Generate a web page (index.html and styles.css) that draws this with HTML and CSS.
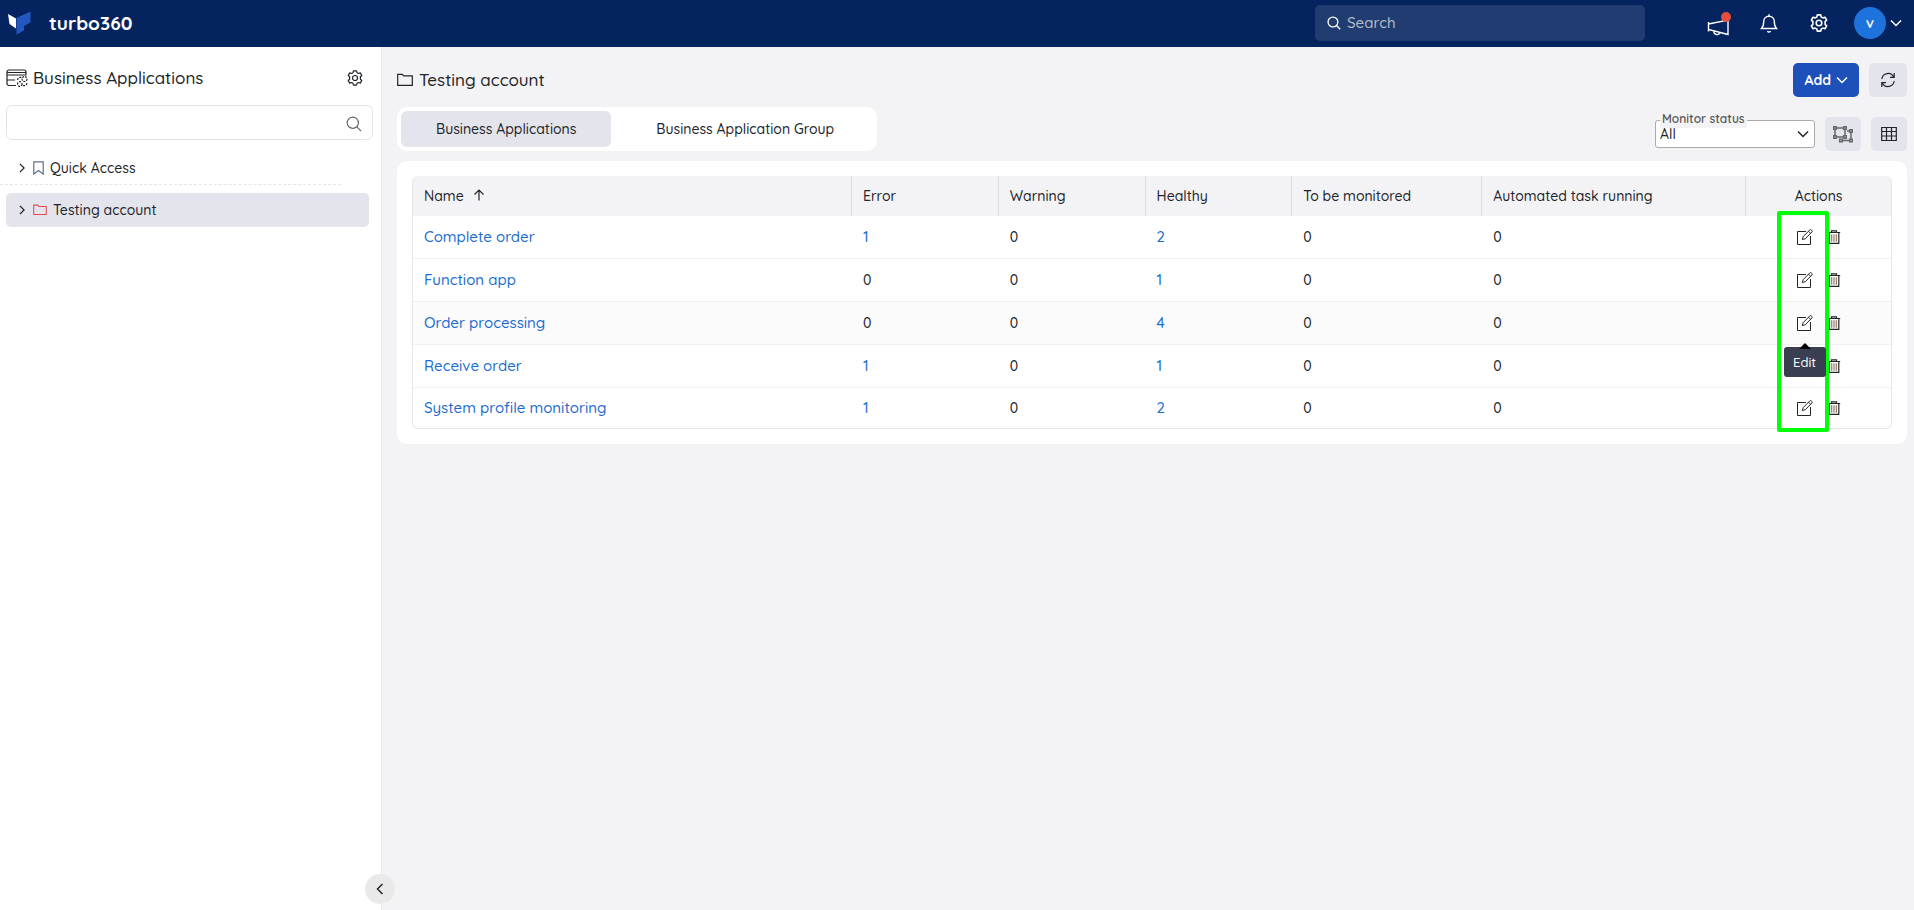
FILE: index.html
```
<!DOCTYPE html>
<html lang="en">
<head>
<meta charset="utf-8">
<meta name="viewport" content="width=device-width, initial-scale=1">
<title>turbo360 - Business Applications</title>
<link rel="stylesheet" href="styles.css">
</head>
<body>
<svg class="sprite" aria-hidden="true">
  <symbol id="chevron" viewBox="0 0 12 12"><path d="M1 3.5l5 5 5-5"/></symbol>
  <symbol id="search" viewBox="0 0 16 16"><circle cx="6.8" cy="6.8" r="5.6"/><path d="M10.9 10.9l4.2 4.2"/></symbol>
  <symbol id="gear" viewBox="0 0 16 16"><circle cx="8" cy="8" r="2.5"/><path stroke-linejoin="round" d="M6.500.8h3l.5 1.900 1.400.8 1.900-.6 1.500 2.600-1.400 1.300v2.400l1.400 1.300-1.500 2.600-1.900-.6-1.400.8-.5 1.900h-3L6 13.300l-1.400-.8-1.900.6-1.500-2.600 1.400-1.300V6.800L1.200 5.500l1.500-2.600 1.900.6L6 2.700z"/></symbol>
  <symbol id="folder" viewBox="0 0 16 14"><path d="M.7 12.300V1.300h4.600l1.500 1.500h8.500v9.500z"/></symbol>
  <symbol id="edit" viewBox="0 0 16 16"><path d="M9 2.500H.5v13h13V7"/><path d="M5.300 10.500l.8-2.800L12.700 1a1.200 1.200 0 0 1 1.700 0l.4.4a1.200 1.200 0 0 1 0 1.700L8.200 9.800zM11.500 2.300l2.100 2.100"/></symbol>
  <symbol id="trash" viewBox="0 0 14 14"><path d="M.8 2.500h12.400M4.500 2.300V.8h5v1.500M2.200 2.700v10.600h9.600V2.700"/><path class="bars" d="M4.700 4.300v7.400M7 4.300v7.400M9.300 4.300v7.400"/></symbol>
</svg>

<header class="topbar">
  <a class="brand" href="#">
    <svg class="brand-mark" viewBox="0 0 24 24" aria-hidden="true"><path fill="#fff" d="M1 3l8 4.500v10L2.500 13z"/><path fill="#2356bf" d="M9.500 7L23.500.5v11L17 15v4.500L9.500 23.500z"/></svg>
    <span class="brand-name">turbo360</span>
  </a>
  <label class="global-search">
    <svg class="icon icon-14" aria-hidden="true"><use href="#search"/></svg>
    <input type="search" placeholder="Search" aria-label="Search">
  </label>
  <nav class="top-actions" aria-label="Account">
    <button class="top-button" type="button" aria-label="Announcements">
      <svg class="icon announce" viewBox="0 0 24 20" aria-hidden="true"><path d="M1.500 8L21 4v14.500L1.500 13.500zM1.500 6v9.500M7 15a3 3 0 0 0 5.800 1.500"/></svg>
      <span class="dot"></span>
    </button>
    <button class="top-button" type="button" aria-label="Notifications">
      <svg class="icon icon-20" viewBox="0 0 20 20" aria-hidden="true"><path d="M2.500 15.500c2.200-2.200 2.200-4 2.200-7C4.700 5.500 7 3.200 10 3.200s5.300 2.300 5.300 5.300c0 3 0 4.800 2.200 7zM8.300 18.200q1.700 1.500 3.400 0M10 1.200v2"/></svg>
    </button>
    <button class="top-button" type="button" aria-label="Settings">
      <svg class="icon icon-18" aria-hidden="true"><use href="#gear"/></svg>
    </button>
    <button class="profile" type="button" aria-label="Profile">
      <span class="avatar">v</span>
      <svg class="icon icon-12" aria-hidden="true"><use href="#chevron"/></svg>
    </button>
  </nav>
</header>

<div class="shell">
  <aside class="sidebar">
    <div class="side-head">
      <svg class="icon app-icon" viewBox="0 0 22 18" aria-hidden="true"><path d="M10 16.500H3A2 2 0 0 1 1 14.500V3a2 2 0 0 1 2-2h15a2 2 0 0 1 2 2v3.500M1 3.500h19M1 6h19M1 11h8"/><g stroke-width="1.200" stroke-dasharray="2 1"><circle cx="18.500" cy="10" r="2.500"/><circle cx="13.800" cy="15" r="2.300"/><path d="M11.500 11a3 3 0 0 1 4-2.500M17 16.500a3 3 0 0 0 4-2.500"/></g></svg>
      <h2>Business Applications</h2>
      <button class="plain" type="button" aria-label="Application settings"><svg class="icon icon-16" aria-hidden="true"><use href="#gear"/></svg></button>
    </div>
    <label class="side-search">
      <input type="text" aria-label="Filter applications">
      <svg class="icon icon-16" aria-hidden="true"><use href="#search"/></svg>
    </label>
    <nav class="tree" aria-label="Folders">
      <a class="node quick" href="#">
        <svg class="icon icon-10 right" aria-hidden="true"><use href="#chevron"/></svg>
        <svg class="icon bookmark" viewBox="0 0 11 14" aria-hidden="true"><path d="M.8.8h9.400v12.200L5.500 9.500.8 13z"/></svg>
        <span>Quick Access</span>
      </a>
      <a class="node selected" href="#" aria-current="true">
        <svg class="icon icon-10 right" aria-hidden="true"><use href="#chevron"/></svg>
        <svg class="icon folder-small" aria-hidden="true"><use href="#folder"/></svg>
        <span>Testing account</span>
      </a>
    </nav>
    <button class="collapse" type="button" aria-label="Collapse sidebar"><svg class="icon icon-12 left" aria-hidden="true"><use href="#chevron"/></svg></button>
  </aside>

  <main class="content">
    <div class="title-row">
      <h1><svg class="icon folder" aria-hidden="true"><use href="#folder"/></svg>Testing account</h1>
      <div class="tools">
        <button class="add" type="button">Add <svg class="icon icon-12" aria-hidden="true"><use href="#chevron"/></svg></button>
        <button class="square" type="button" aria-label="Refresh"><svg class="icon icon-16" viewBox="0 0 16 16" aria-hidden="true"><path d="M1.800 7A6.300 6.300 0 0 1 13.700 5M14.200 1v4.300H10M14.200 9A6.300 6.300 0 0 1 2.300 11M1.800 15v-4.300H6"/></svg></button>
      </div>
    </div>
    <div class="filter-row">
      <div class="tabs" role="tablist">
        <button class="tab active" type="button" role="tab" aria-selected="true">Business Applications</button>
        <button class="tab" type="button" role="tab" aria-selected="false">Business Application Group</button>
      </div>
      <div class="tools">
        <div class="status">
          <label for="status">Monitor status</label>
          <select id="status"><option>All</option></select>
          <svg class="icon icon-12" aria-hidden="true"><use href="#chevron"/></svg>
        </div>
        <button class="square group" type="button" aria-label="Group view"><svg class="icon icon-20" viewBox="0 0 20 18" aria-hidden="true"><path d="M2 3h10v9H2zM14 6h4v9.500H8V14"/><path fill="#e3e4ec" d="M.700 1.700h2.500v2.500H.700zM10.700 1.700h2.500v2.500h-2.500zM.7 10.700h2.500v2.500H.7zM10.700 10.700h2.500v2.500h-2.500zM16.700 4.700h2.500v2.500h-2.500zM16.700 14.200h2.500v2.500h-2.500zM6.700 14.200h2.500v2.500H6.700z"/></svg></button>
        <button class="square" type="button" aria-label="Table view"><svg class="icon icon-16" viewBox="0 0 16 16" aria-hidden="true"><path d="M.7 1.500h14.600v13H.7zM.7 5.500h14.600M.7 10h14.600M5.500 1.500v13M10.500 1.500v13"/></svg></button>
      </div>
    </div>

    <section class="card">
      <div class="table-frame">
        <table>
          <colgroup><col class="c-name"><col class="c-count"><col class="c-count"><col class="c-count"><col class="c-monitor"><col class="c-task"><col class="c-actions"></colgroup>
          <thead>
            <tr><th>Name <svg class="icon sort" viewBox="0 0 12 12" aria-hidden="true"><path d="M6 11.500V1.200M1.500 5.500L6 1l4.500 4.500"/></svg></th><th>Error</th><th>Warning</th><th>Healthy</th><th>To be monitored</th><th>Automated task running</th><th class="actions-head">Actions</th></tr>
          </thead>
          <tbody>
            <tr><td><a href="#">Complete order</a></td><td><a href="#">1</a></td><td>0</td><td><a href="#">2</a></td><td>0</td><td>0</td>
              <td><div class="row-actions"><button class="plain" type="button" aria-label="Edit"><svg class="icon icon-16 thin"><use href="#edit"/></svg></button><button class="plain" type="button" aria-label="Delete"><svg class="icon icon-14"><use href="#trash"/></svg></button></div></td></tr>
            <tr><td><a href="#">Function app</a></td><td>0</td><td>0</td><td><a href="#">1</a></td><td>0</td><td>0</td>
              <td><div class="row-actions"><button class="plain" type="button" aria-label="Edit"><svg class="icon icon-16 thin"><use href="#edit"/></svg></button><button class="plain" type="button" aria-label="Delete"><svg class="icon icon-14"><use href="#trash"/></svg></button></div></td></tr>
            <tr class="hovered"><td><a href="#">Order processing</a></td><td>0</td><td>0</td><td><a href="#">4</a></td><td>0</td><td>0</td>
              <td><div class="row-actions"><button class="plain" type="button" aria-describedby="edit-tip" aria-label="Edit"><svg class="icon icon-16 thin"><use href="#edit"/></svg></button><button class="plain" type="button" aria-label="Delete"><svg class="icon icon-14"><use href="#trash"/></svg></button><span class="tooltip" id="edit-tip" role="tooltip">Edit</span></div></td></tr>
            <tr><td><a href="#">Receive order</a></td><td><a href="#">1</a></td><td>0</td><td><a href="#">1</a></td><td>0</td><td>0</td>
              <td><div class="row-actions"><button class="plain" type="button" aria-label="Edit"><svg class="icon icon-16 thin"><use href="#edit"/></svg></button><button class="plain" type="button" aria-label="Delete"><svg class="icon icon-14"><use href="#trash"/></svg></button></div></td></tr>
            <tr><td><a href="#">System profile monitoring</a></td><td><a href="#">1</a></td><td>0</td><td><a href="#">2</a></td><td>0</td><td>0</td>
              <td><div class="row-actions"><button class="plain" type="button" aria-label="Edit"><svg class="icon icon-16 thin"><use href="#edit"/></svg></button><button class="plain" type="button" aria-label="Delete"><svg class="icon icon-14"><use href="#trash"/></svg></button></div></td></tr>
          </tbody>
        </table>
        <div class="highlight" aria-hidden="true"></div>
      </div>
    </section>
  </main>
</div>
</body>
</html>
```
FILE: styles.css
```
:root {
  --navy: #05245f;
  --blue: #1d50b8;
  --link: #1c6dd0;
  --ink: #212529;
  --page: #f3f3f6;
  --soft: #e3e4ec;
  --line: #e6e6e9;
}

* { box-sizing: border-box; }

body {
  margin: 0;
  min-height: 100vh;
  display: flex;
  flex-direction: column;
  background: var(--page);
  color: var(--ink);
  font: 500 14px/20px Quicksand, Inter, "Open Sans", sans-serif;
}

button, input, select { font: inherit; color: inherit; }
button { border: 0; padding: 0; cursor: pointer; background: none; }
a { color: var(--link); text-decoration: none; }
h1, h2 { margin: 0; font-size: 17px; line-height: 24px; font-weight: 500; }

.sprite { position: absolute; width: 0; height: 0; }
.icon { display: block; flex: none; fill: none; stroke: currentColor; stroke-width: 1.200; }
.icon-10 { width: 10px; height: 10px; stroke-width: 1.500; }
.icon-12 { width: 12px; height: 12px; stroke-width: 1.500; }
.icon-14 { width: 14px; height: 14px; }
.icon-16 { width: 16px; height: 16px; }
.icon-18 { width: 18px; height: 18px; }
.icon-20 { width: 20px; height: 20px; stroke-width: 1.500; }
.thin { stroke-width: 1; }
.right { transform: rotate(-90deg); }
.left { transform: rotate(90deg); }
.folder { width: 16px; height: 14px; }
.folder-small { width: 14px; height: 12px; color: #e4494e; }
.bars { stroke: #98796a; }

.topbar {
  display: flex;
  align-items: center;
  height: 47px;
  padding: 0 12px 2px 7px;
  background: var(--navy);
  color: #fff;
}
.brand { display: flex; align-items: center; gap: 18px; margin-right: auto; color: #fff; }
.brand-mark { width: 24px; height: 24px; }
.brand-name { font-size: 19px; line-height: 24px; font-weight: 700; }
.global-search {
  display: flex;
  align-items: center;
  gap: 6px;
  width: 330px;
  height: 36px;
  padding: 0 12px;
  border-radius: 5px;
  background: #213c70;
}
.global-search .icon { stroke-width: 1.500; }
.global-search input { flex: 1; min-width: 0; border: 0; padding: 0; outline: 0; background: none; font-size: 15px; }
.global-search input::placeholder { color: #b5bccb; opacity: 1; }
.top-actions { display: flex; align-items: center; gap: 26px; margin-left: 62px; }
.top-button { position: relative; display: grid; place-items: center; width: 24px; height: 24px; }
.top-button .icon { stroke-width: 1.400; }
.announce { width: 24px; height: 20px; }
.dot { position: absolute; top: 1px; right: 0; width: 10px; height: 10px; border-radius: 50%; background: #e74c3c; }
.announce { margin-top: 5px; }
.profile { display: flex; align-items: center; gap: 4px; margin-left: -3px; }
.avatar { display: grid; place-items: center; width: 32px; height: 32px; border-radius: 50%; background: #1d73db; color: #fff; font-size: 15px; font-weight: 600; }

.shell { flex: 1; display: flex; }
.sidebar { position: relative; flex: none; width: 382px; padding: 19px 8px 0 6px; border-right: 1px solid #e9e9ec; background: #fff; }
.side-head { display: flex; align-items: center; gap: 5px; padding-right: 10px; }
.side-head h2 { flex: 1; }
.app-icon { width: 22px; height: 18px; }
.plain { display: grid; place-items: center; }
.side-search {
  display: flex;
  align-items: center;
  height: 35px;
  margin-top: 15px;
  padding: 3px 10px 0;
  border: 1px solid #e3e3e6;
  border-radius: 6px;
}
.side-search input { flex: 1; min-width: 0; border: 0; outline: 0; background: none; }
.side-search .icon { color: #666; }
.tree { display: flex; flex-direction: column; gap: 8px; margin-top: 11px; }
.node { display: flex; align-items: center; gap: 6px; height: 34px; padding-left: 11px; color: var(--ink); }
.quick { margin: 0 32px 0 -6px; padding-left: 17px; border-bottom: 1px dashed #e6e6e6; }
.bookmark { width: 11px; height: 14px; color: #5d708e; }
.selected { margin-right: 4px; border-radius: 5px; background: var(--soft); }
.collapse {
  position: absolute;
  right: -14px;
  bottom: 6px;
  display: grid;
  place-items: center;
  width: 30px;
  height: 30px;
  border-radius: 50%;
  background: #e9e9ea;
}

.content { flex: 1; min-width: 0; padding: 16px 7px 16px 15px; }
.title-row, .filter-row { display: flex; align-items: center; justify-content: space-between; }
h1 { display: flex; align-items: center; gap: 6px; }
.tools { display: flex; align-items: center; gap: 10px; }
.add { display: flex; align-items: center; gap: 5px; height: 34px; padding: 0 11px; border-radius: 5px; background: var(--blue); color: #fff; font-weight: 700; }
.square { display: grid; place-items: center; width: 38px; height: 34px; border-radius: 5px; background: var(--soft); }
.filter-row { margin-top: 10px; }
.filter-row .tools { padding-top: 10px; }
.filter-row .square { width: 36px; }
.group { color: #666; }
.tabs { display: flex; gap: 6px; padding: 4px; border-radius: 10px; background: #fff; }
.tab { height: 36px; padding: 0 35px; border-radius: 6px; }
.tab + .tab { padding: 0 39px; }
.tab.active { background: var(--soft); }
.status { position: relative; }
.status select { display: block; width: 160px; height: 28px; padding: 0 4px; border: 1px solid #aaa; border-radius: 3px; background: #fff; appearance: none; }
.status label { position: absolute; top: -10px; left: 5px; padding: 0 2px; background: linear-gradient(transparent 9px, var(--page) 9px); color: #555; font-size: 12px; line-height: 18px; font-weight: 600; }
.status .icon { position: absolute; top: 8px; right: 6px; pointer-events: none; }

.card { margin-top: 10px; padding: 15px; border-radius: 10px; background: #fff; }
.table-frame { position: relative; }
table { width: 100%; table-layout: fixed; border-collapse: separate; border-spacing: 0; border: 1px solid var(--line); border-top: 0; border-radius: 6px; }
.c-name { width: 29.700%; }
.c-count { width: 9.930%; }
.c-monitor { width: 12.850%; }
.c-task { width: 17.850%; }
.c-actions { width: 9.800%; }
th { height: 40px; padding: 0 11px; border-right: 1px solid #dcdde4; background: var(--page); text-align: left; font-weight: 500; }
th:first-child { border-top-left-radius: 6px; }
th:last-child { border-right: 0; border-top-right-radius: 6px; }
.actions-head { text-align: center; }
.sort { display: inline-block; width: 12px; height: 12px; margin-left: 5px; }
td { height: 43px; padding: 0 11px; border-bottom: 1px solid #f0f0f2; }
td a { font-size: 15px; }
tbody tr:last-child td { height: 40px; border-bottom: 0; }
.hovered { background: #fbfbfc; }
.row-actions { position: relative; display: flex; align-items: center; justify-content: center; gap: 14px; }
.tooltip {
  position: absolute;
  z-index: 2;
  top: 32px;
  left: calc(50% - 35px);
  width: 42px;
  border-radius: 3px;
  background: #3a3e51;
  color: #fff;
  font-size: 13px;
  line-height: 30px;
  text-align: center;
}
.tooltip::before { content: ""; position: absolute; top: -4px; left: 15px; border: 6px solid transparent; border-top: 0; border-bottom-color: #000; }
.highlight { position: absolute; top: 35px; right: 63px; bottom: -3px; width: 52px; border: 4px solid #00ff08; border-radius: 2px; }
```
